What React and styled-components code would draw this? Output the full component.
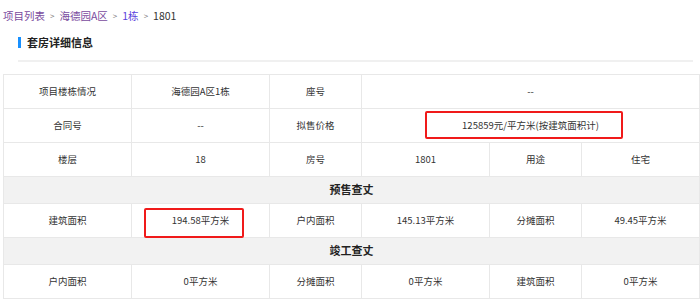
import React, { Fragment } from "react";
import styled, { createGlobalStyle } from "styled-components";

const GlobalStyle = createGlobalStyle`
    body {
        margin: 0;
        background: #fff;
        font-family: "Noto Sans CJK SC", "Noto Sans", sans-serif;
        color: #333;
    }
`;

const Page = styled.div`
    padding: 6px 1px 0 3px;
`;

const Breadcrumb = styled.nav`
    display: flex;
    align-items: center;
    gap: 5px;
    height: 18px;
    font-size: 10.5px;
`;

const Crumb = styled.span`
    color: ${(p) => p.color || "#333"};
`;

const Sep = styled.span`
    color: #777;
    font-size: 8px;
`;

const TitleBar = styled.div`
    display: flex;
    align-items: center;
    gap: 6px;
    margin: 11px 0 0 15px;
    height: 14px;
    font-size: 11px;
    font-weight: bold;
    color: #222;
    &::before {
        content: "";
        width: 3px;
        height: 11px;
        background: #1890ff;
    }
`;

const Divider = styled.div`
    margin: 11px 6px 0 15px;
    height: 2px;
    background: #f0f0f0;
`;

const Table = styled.table`
    margin-top: 12px;
    width: 696px;
    table-layout: fixed;
    border-collapse: collapse;
    font-size: 9.5px;
    line-height: 1.2;
    color: #333;
`;

const Td = styled.td`
    position: relative;
    height: 34px;
    box-sizing: border-box;
    padding: 0;
    border: 1px solid #e8e8e8;
    text-align: center;
    white-space: nowrap;
`;

const SectionCell = styled.td`
    height: 27px;
    box-sizing: border-box;
    padding: 0;
    border: 1px solid #e8e8e8;
    background: #f2f2f2;
    text-align: center;
    font-size: 11px;
    font-weight: bold;
    color: #222;
`;

// red annotation frame drawn over a value
const Mark = styled.span`
    position: absolute;
    left: ${(p) => p.left}px;
    top: ${(p) => p.top}px;
    width: ${(p) => p.w}px;
    height: ${(p) => p.h}px;
    box-sizing: border-box;
    border: 2px solid #f01a1a;
    border-radius: 2px;
`;

const widths = [128, 138, 92, 128, 92, 118];

export default function App() {
    return (
        <Fragment>
            <GlobalStyle />
            <Page>
                <Breadcrumb>
                    <Crumb color="#7a4b9e">项目列表</Crumb>
                    <Sep>&gt;</Sep>
                    <Crumb color="#7a4b9e">海德园A区</Crumb>
                    <Sep>&gt;</Sep>
                    <Crumb color="#5b3fdc">1栋</Crumb>
                    <Sep>&gt;</Sep>
                    <Crumb>1801</Crumb>
                </Breadcrumb>

                <TitleBar>套房详细信息</TitleBar>
                <Divider />

                <Table>
                    <colgroup>
                        {widths.map((w, i) => (
                            <col key={i} style={{ width: w }} />
                        ))}
                    </colgroup>
                    <tbody>
                        <tr>
                            <Td>项目楼栋情况</Td>
                            <Td>海德园A区1栋</Td>
                            <Td>座号</Td>
                            <Td colSpan={3}>--</Td>
                        </tr>
                        <tr>
                            <Td>合同号</Td>
                            <Td>--</Td>
                            <Td>拟售价格</Td>
                            <Td colSpan={3}>
                                125859元/平方米(按建筑面积计)
                                <Mark left={63} top={2} w={198} h={28} />
                            </Td>
                        </tr>
                        <tr>
                            <Td>楼层</Td>
                            <Td>18</Td>
                            <Td>房号</Td>
                            <Td>1801</Td>
                            <Td>用途</Td>
                            <Td>住宅</Td>
                        </tr>
                        <tr>
                            <SectionCell colSpan={6}>预售查丈</SectionCell>
                        </tr>
                        <tr>
                            <Td>建筑面积</Td>
                            <Td>
                                194.58平方米
                                <Mark left={12} top={4} w={100} h={30} />
                            </Td>
                            <Td>户内面积</Td>
                            <Td>145.13平方米</Td>
                            <Td>分摊面积</Td>
                            <Td>49.45平方米</Td>
                        </tr>
                        <tr>
                            <SectionCell colSpan={6}>竣工查丈</SectionCell>
                        </tr>
                        <tr>
                            <Td>户内面积</Td>
                            <Td>0平方米</Td>
                            <Td>分摊面积</Td>
                            <Td>0平方米</Td>
                            <Td>建筑面积</Td>
                            <Td>0平方米</Td>
                        </tr>
                    </tbody>
                </Table>
            </Page>
        </Fragment>
    );
}
